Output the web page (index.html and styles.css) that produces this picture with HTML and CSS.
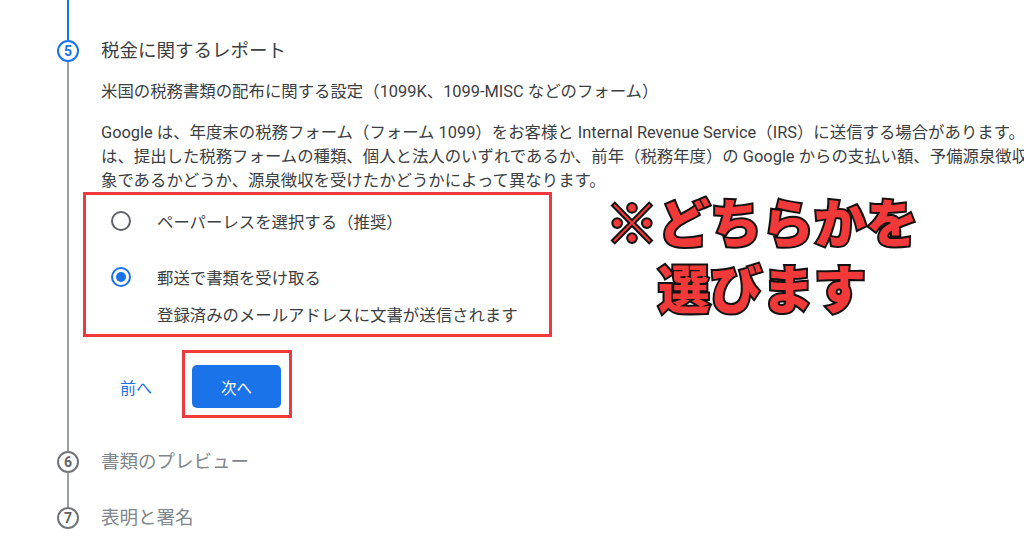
FILE: index.html
```html
<!DOCTYPE html>
<html lang="ja">
<head>
  <meta charset="UTF-8">
  <meta name="viewport" content="width=device-width, initial-scale=1.0">
  <title>税金に関するレポート</title>
  <link rel="stylesheet" href="styles.css">
</head>
<body>

  <div class="stepper">
    <!-- line coming from the previous step -->
    <div class="step-lead"><span class="lead-line"></span></div>

    <!-- Step 5: active -->
    <div class="step">
      <div class="step-rail">
        <span class="step-num active">5</span>
        <span class="rail-line"></span>
      </div>
      <div class="step-body open">
        <div class="step-title">税金に関するレポート</div>
        <div class="step-desc">米国の税務書類の配布に関する設定（1099K、1099-MISC などのフォーム）</div>
        <p class="step-text">
          Google は、年度末の税務フォーム（フォーム 1099）をお客様と Internal Revenue Service（IRS）に送信する場合があります。<br>
          は、提出した税務フォームの種類、個人と法人のいずれであるか、前年（税務年度）の Google からの支払い額、予備源泉徴収<br>
          象であるかどうか、源泉徴収を受けたかどうかによって異なります。
        </p>

        <div class="choice-box">
          <label class="choice">
            <span class="radio"></span>
            <span>ペーパーレスを選択する（推奨）</span>
          </label>
          <label class="choice">
            <span class="radio checked"></span>
            <span>郵送で書類を受け取る</span>
          </label>
          <div class="choice-note">登録済みのメールアドレスに文書が送信されます</div>
        </div>

        <div class="actions">
          <button class="text-btn">前へ</button>
          <div class="mark-box">
            <button class="next-btn">次へ</button>
          </div>
        </div>
      </div>
    </div>

    <!-- Step 6 -->
    <div class="step">
      <div class="step-rail">
        <span class="step-num">6</span>
        <span class="rail-line"></span>
      </div>
      <div class="step-body gap">
        <div class="step-title muted">書類のプレビュー</div>
      </div>
    </div>

    <!-- Step 7 -->
    <div class="step">
      <div class="step-rail">
        <span class="step-num">7</span>
      </div>
      <div class="step-body">
        <div class="step-title muted">表明と署名</div>
      </div>
    </div>
  </div>

  <!-- Annotation -->
  <div class="note">※どちらかを<br>選びます</div>

</body>
</html>
```

FILE: styles.css
```css
html, body {
  margin: 0;
  width: 1024px;
  height: 538px;
  overflow: hidden;
  background: #fff;
}

body {
  position: relative;
  font-family: Roboto, "Noto Sans CJK JP", sans-serif;
  color: #3c4043;
}

.stepper {
  padding-left: 57px;
}

.step-lead {
  width: 22px;
  height: 40px;
  display: flex;
  justify-content: center;
}

.lead-line {
  width: 2px;
  background: #1a73e8;
}

.step {
  display: flex;
  gap: 22px;
}

.step-rail {
  width: 22px;
  display: flex;
  flex-direction: column;
  align-items: center;
  flex-shrink: 0;
}

.rail-line {
  flex: 1;
  width: 2px;
  background: #9aa0a6;
}

.step-num {
  width: 22px;
  height: 22px;
  box-sizing: border-box;
  border: 2px solid #70757a;
  border-radius: 50%;
  display: flex;
  align-items: center;
  justify-content: center;
  font-size: 14px;
  font-weight: 700;
  color: #5f6368;
}

.step-num.active {
  border-color: #1a73e8;
  color: #1a73e8;
}

.step-body {
  min-width: 0;
}

.step-body.open {
  padding-bottom: 33px;
}

.step-body.gap {
  padding-bottom: 34px;
}

.step-title {
  font-size: 18.5px;
  line-height: 22px;
  white-space: nowrap;
}

.step-title.muted {
  color: #80868b;
}

.step-desc {
  margin-top: 18px;
  font-size: 16.4px;
  line-height: 24px;
  white-space: nowrap;
}

.step-text {
  margin: 17px 0 0;
  font-size: 16.4px;
  line-height: 24px;
  white-space: nowrap;
}

/* Highlighted radio group */
.choice-box {
  width: 469px;
  box-sizing: border-box;
  margin: -1px 0 0 -18px;
  padding: 6px 0 6px 25px;
  border: 3px solid #f0393c;
}

.choice {
  display: flex;
  align-items: center;
  gap: 26px;
  height: 40px;
  font-size: 16.4px;
}

.choice + .choice {
  margin-top: 16px;
}

.radio {
  width: 20px;
  height: 20px;
  box-sizing: border-box;
  border: 2px solid #5f6368;
  border-radius: 50%;
  display: flex;
  align-items: center;
  justify-content: center;
}

.radio.checked {
  border-color: #1a73e8;
}

.radio.checked::after {
  content: "";
  width: 10px;
  height: 10px;
  border-radius: 50%;
  background: #1a73e8;
}

.choice-note {
  margin: 7px 0 0 46px;
  font-size: 16.4px;
  line-height: 24px;
}

/* Buttons */
.actions {
  display: flex;
  align-items: flex-end;
  gap: 14px;
  margin-top: 13px;
}

.text-btn {
  margin: 0 0 10px 3px;
  padding: 0 16px;
  height: 43px;
  border: none;
  background: none;
  font-family: inherit;
  font-size: 16px;
  color: #1a73e8;
}

.mark-box {
  padding: 12px 8px 7px 7px;
  border: 3px solid #f0393c;
}

.next-btn {
  display: block;
  width: 89px;
  height: 43px;
  border: none;
  border-radius: 5px;
  background: #1a73e8;
  color: #fff;
  font-family: inherit;
  font-size: 15.5px;
}

/* Annotation over the page */
.note {
  position: absolute;
  left: 597px;
  top: 188px;
  width: 330px;
  text-align: center;
  font-family: "Noto Sans CJK JP", sans-serif;
  font-size: 52px;
  font-weight: 900;
  line-height: 66px;
  color: #f2393a;
  -webkit-text-stroke: 4px #111;
  paint-order: stroke fill;
}
```
